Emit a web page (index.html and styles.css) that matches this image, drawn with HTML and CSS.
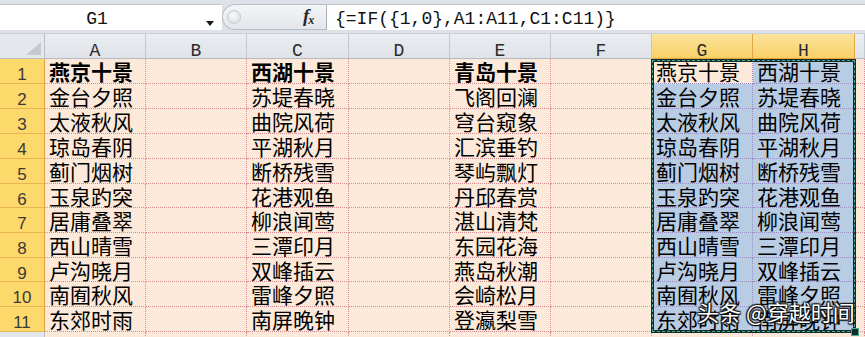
FILE: index.html
```html
<!DOCTYPE html>
<html lang="zh-CN">
<head>
<meta charset="utf-8">
<title>Excel</title>
<link rel="stylesheet" href="styles.css">
</head>
<body>
<div class="app">
  <div class="fbar">
    <div class="namebox"><span class="ref">G1</span></div>
    <div class="fxzone"><span class="knob"></span><span class="fx"><i>f</i><span class="fxx">x</span></span></div>
    <div class="formula">{=IF({1,0},A1:A11,C1:C11)}</div>
  </div>
  <div class="sheet">
    <div class="corner"></div>
    <div class="ch">A</div><div class="ch">B</div><div class="ch">C</div><div class="ch">D</div><div class="ch">E</div><div class="ch">F</div><div class="ch sel">G</div><div class="ch sel">H</div><div class="ch"></div>

    <div class="rh sel">1</div><div class="c b">燕京十景</div><div class="c"></div><div class="c b">西湖十景</div><div class="c"></div><div class="c b">青岛十景</div><div class="c"></div><div class="c active">燕京十景</div><div class="c hl">西湖十景</div><div class="c"></div>
    <div class="rh sel">2</div><div class="c">金台夕照</div><div class="c"></div><div class="c">苏堤春晓</div><div class="c"></div><div class="c">飞阁回澜</div><div class="c"></div><div class="c hl">金台夕照</div><div class="c hl">苏堤春晓</div><div class="c"></div>
    <div class="rh sel">3</div><div class="c">太液秋风</div><div class="c"></div><div class="c">曲院风荷</div><div class="c"></div><div class="c">穹台窥象</div><div class="c"></div><div class="c hl">太液秋风</div><div class="c hl">曲院风荷</div><div class="c"></div>
    <div class="rh sel">4</div><div class="c">琼岛春阴</div><div class="c"></div><div class="c">平湖秋月</div><div class="c"></div><div class="c">汇滨垂钓</div><div class="c"></div><div class="c hl">琼岛春阴</div><div class="c hl">平湖秋月</div><div class="c"></div>
    <div class="rh sel">5</div><div class="c">蓟门烟树</div><div class="c"></div><div class="c">断桥残雪</div><div class="c"></div><div class="c">琴屿飘灯</div><div class="c"></div><div class="c hl">蓟门烟树</div><div class="c hl">断桥残雪</div><div class="c"></div>
    <div class="rh sel">6</div><div class="c">玉泉趵突</div><div class="c"></div><div class="c">花港观鱼</div><div class="c"></div><div class="c">丹邱春赏</div><div class="c"></div><div class="c hl">玉泉趵突</div><div class="c hl">花港观鱼</div><div class="c"></div>
    <div class="rh sel">7</div><div class="c">居庸叠翠</div><div class="c"></div><div class="c">柳浪闻莺</div><div class="c"></div><div class="c">湛山清梵</div><div class="c"></div><div class="c hl">居庸叠翠</div><div class="c hl">柳浪闻莺</div><div class="c"></div>
    <div class="rh sel">8</div><div class="c">西山晴雪</div><div class="c"></div><div class="c">三潭印月</div><div class="c"></div><div class="c">东园花海</div><div class="c"></div><div class="c hl">西山晴雪</div><div class="c hl">三潭印月</div><div class="c"></div>
    <div class="rh sel">9</div><div class="c">卢沟晓月</div><div class="c"></div><div class="c">双峰插云</div><div class="c"></div><div class="c">燕岛秋潮</div><div class="c"></div><div class="c hl">卢沟晓月</div><div class="c hl">双峰插云</div><div class="c"></div>
    <div class="rh sel">10</div><div class="c">南囿秋风</div><div class="c"></div><div class="c">雷峰夕照</div><div class="c"></div><div class="c">会崎松月</div><div class="c"></div><div class="c hl">南囿秋风</div><div class="c hl">雷峰夕照</div><div class="c"></div>
    <div class="rh sel">11</div><div class="c">东郊时雨</div><div class="c"></div><div class="c">南屏晚钟</div><div class="c"></div><div class="c">登瀛梨雪</div><div class="c"></div><div class="c hl">东郊时雨</div><div class="c hl">南屏晚钟</div><div class="c"></div>
    <div class="rh"></div><div class="c"></div><div class="c"></div><div class="c"></div><div class="c"></div><div class="c"></div><div class="c"></div><div class="c"></div><div class="c"></div><div class="c"></div>
  </div>
  <div class="selection"><span class="handle"></span></div>
  <div class="watermark">头条 @穿越时间</div>
</div>
</body>
</html>
```

FILE: styles.css
```css
* { box-sizing: border-box; }
html, body { margin: 0; padding: 0; }
body {
  width: 865px;
  height: 337px;
  overflow: hidden;
  background: #fde9d9;
  font-family: "Noto Sans CJK SC", "Noto Sans", sans-serif;
  color: #000;
}
.app { position: relative; width: 865px; height: 337px; overflow: hidden; }

/* formula bar */
.fbar {
  display: flex;
  height: 34px;
  padding-top: 4px;
  background: #dde2e8;
  border-bottom: 1px solid #c9ced5;
}
.namebox {
  position: relative;
  width: 222px;
  height: 26px;
  background: #fff;
  border-top: 1px solid #c2c8d0;
  text-align: center;
  font-family: "Liberation Mono", monospace;
  font-size: 18px;
  line-height: 22px;
  padding-top: 3px;
  padding-right: 28px;
  color: #111;
}
.namebox::after {
  content: "";
  position: absolute;
  left: 206px;
  top: 16px;
  border-left: 4px solid transparent;
  border-right: 4px solid transparent;
  border-top: 5px solid #1a1a1a;
}
.fxzone {
  position: relative;
  width: 105px;
  height: 26px;
  background: linear-gradient(#f4f5f7, #e3e6ea);
  border: 1px solid #b7bec7;
  border-right: 1px solid #aab1ba;
  border-radius: 13px 0 0 13px;
}
.knob {
  position: absolute;
  left: 4px;
  top: 5px;
  width: 14px;
  height: 14px;
  border-radius: 50%;
  background: radial-gradient(circle at 45% 40%, #fafbfc, #d3d8de);
  border: 1px solid #c4c9cf;
}
.fx {
  position: absolute;
  left: 80px;
  top: 1px;
  font-family: "Liberation Serif", serif;
  font-weight: bold;
  font-size: 19px;
  line-height: 20px;
  color: #2a2a2a;
}
.fx i { font-style: italic; }
.fxx {
  font-style: italic;
  font-size: 12px;
  position: relative;
  top: 2px;
  left: -1px;
}
.formula {
  flex: 1;
  height: 26px;
  background: #fff;
  border-top: 1px solid #c2c8d0;
  font-family: "Liberation Mono", monospace;
  font-size: 18px;
  line-height: 22px;
  padding-top: 3px;
  padding-left: 8px;
  color: #111;
  white-space: nowrap;
}

/* sheet grid */
.sheet {
  display: grid;
  grid-template-columns: 45px 101px 101px 102px 101px 101px 101px 101px 102px 1fr;
  grid-template-rows: 25px 25px 25px 25px 25px 25px 24px 25px 25px 24px 25px 25px 10px;
}
.corner {
  position: relative;
  background: #e4e8ed;
  border-right: 1px solid #b9c0c8;
  border-bottom: 1px solid #b9c0c8;
}
.corner::after {
  content: "";
  position: absolute;
  right: 3px;
  bottom: 3px;
  border-left: 15px solid transparent;
  border-bottom: 13px solid #c5cad0;
}
.ch {
  background: linear-gradient(#eaedf1, #dfe3e8);
  border-right: 1px solid #c3c8cf;
  border-bottom: 1px solid #b4bbc4;
  text-align: center;
  font-family: "Liberation Mono", monospace;
  font-size: 18px;
  line-height: 14px;
  padding-top: 10px;
  color: #2b2b2b;
}
.ch.sel {
  background: linear-gradient(#fbe49c, #f8d067);
  border-right: 1px solid #e2a642;
  border-bottom: 1px solid #eda23a;
}
.rh {
  background: #e2e6eb;
  border-right: 1px solid #b9c0c8;
  border-bottom: 1px solid #c3c8cf;
  text-align: center;
  font-family: "Liberation Sans", Arial, sans-serif;
  font-size: 17px;
  line-height: 15px;
  padding-top: 8px;
  color: #3a3a3a;
}
.rh.sel {
  background: #fdd86b;
  border-right: 1px solid #e5a13a;
  border-bottom: 1px solid #e9b554;
}
.c {
  background: #fde9d9;
  border-right: 1px dotted #d98a95;
  border-bottom: 1px dotted #d98a95;
  font-size: 21px;
  line-height: 21px;
  padding-top: 2px;
  padding-left: 4px;
  white-space: nowrap;
}
.c.b { font-weight: bold; }
.c.hl {
  background: #b8cce4;
  border-right-color: #9a8ec4;
  border-bottom-color: #9a8ec4;
}
.c.active {
  border-right-color: #9a8ec4;
  border-bottom-color: #9a8ec4;
}

/* overlays */
.selection {
  position: absolute;
  left: 651px;
  top: 59px;
  width: 205px;
  height: 274px;
  border: 3px solid #132e27;
  pointer-events: none;
}
.selection::before {
  content: "";
  position: absolute;
  inset: -2px;
  border: 1px dashed #4ea79b;
}
.handle {
  position: absolute;
  right: -6px;
  bottom: -6px;
  width: 8px;
  height: 8px;
  background: #132e27;
  border: 1px solid #4ea79b;
}
.watermark {
  position: absolute;
  left: 697px;
  top: 300px;
  font-size: 22px;
  line-height: 22px;
  color: #fff;
  white-space: nowrap;
  text-shadow: 0 0 2px #000, 1px 1px 1px #000, -1px -1px 1px #222, 1px -1px 1px #222, -1px 1px 1px #222;
}
```
